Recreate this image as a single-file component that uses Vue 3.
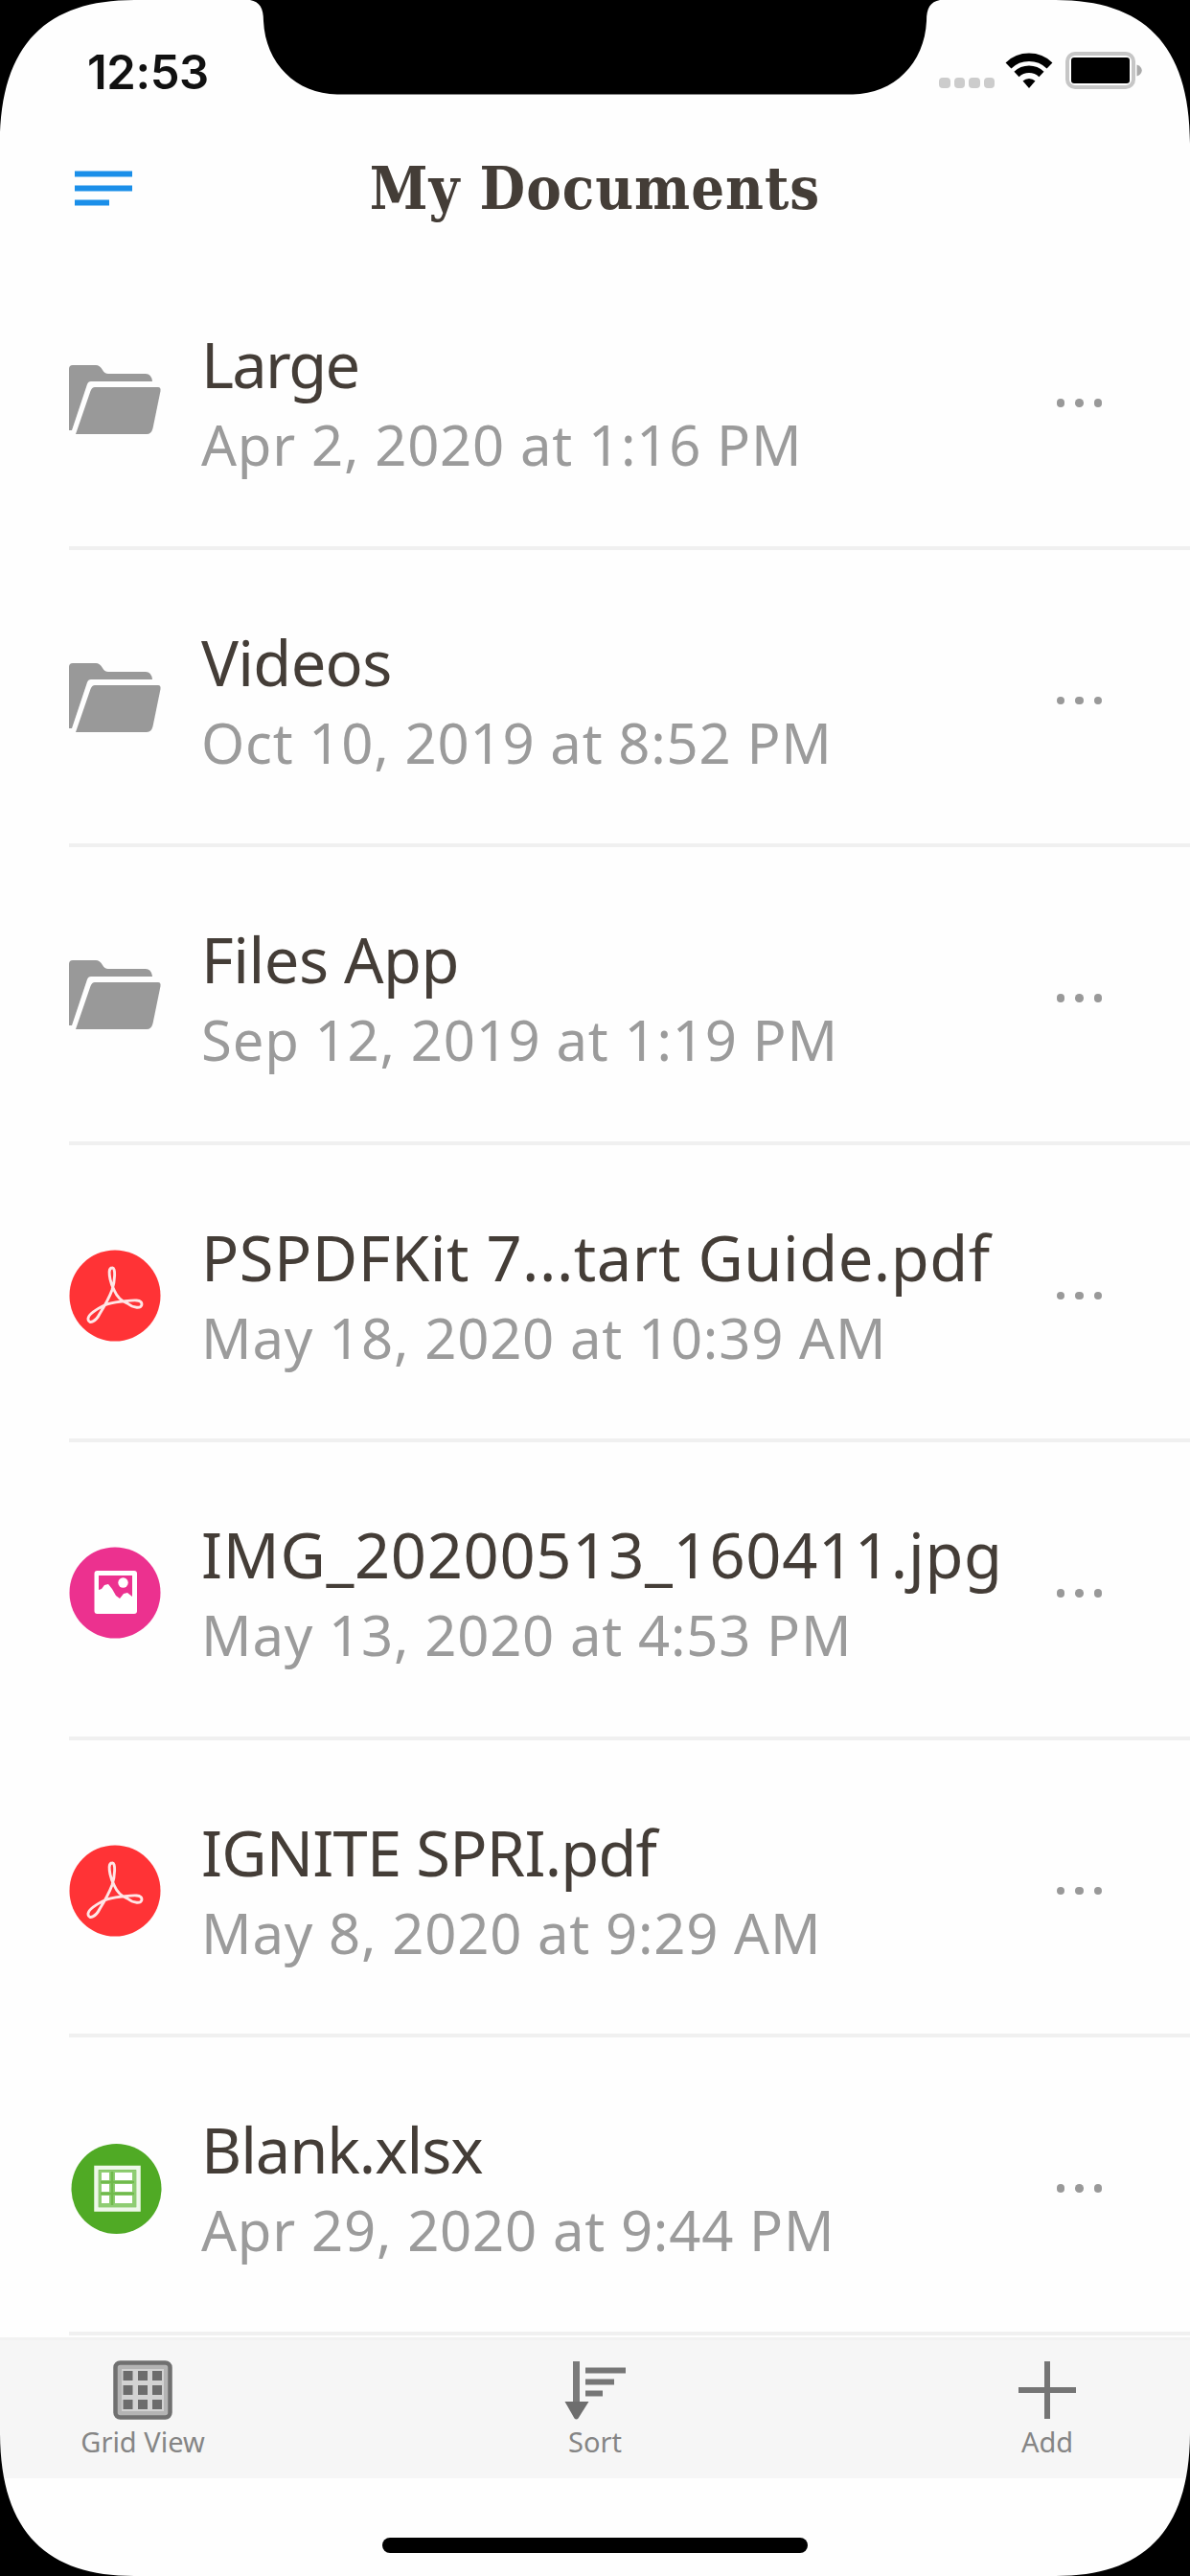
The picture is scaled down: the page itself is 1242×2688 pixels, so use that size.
<template>
  <div class="phone">
    <div class="status-bar">
      <span class="time">12:53</span>
      <div class="status-icons">
        <div class="signal"><i v-for="n in 4" :key="n"></i></div>
        <svg class="wifi" width="50" height="38" viewBox="0 0 50 38">
          <path d="M3.5 14.5a31 31 0 0 1 43 0" fill="none" stroke="#000" stroke-width="8.5" />
          <path d="M12 23.5a19 19 0 0 1 26 0" fill="none" stroke="#000" stroke-width="7.5" />
          <path d="M18.5 30.5a9.5 9.5 0 0 1 13 0L25 38z" />
        </svg>
        <svg class="battery" width="80" height="39" viewBox="0 0 80 39">
          <rect x="2" y="2" width="69" height="35" rx="8" fill="none" stroke="#c6c6c6" stroke-width="4" />
          <rect x="6" y="6" width="61" height="27" rx="3" />
          <path d="M74.5 13.5c7 2 7 10 0 12z" fill="#aaa" />
        </svg>
      </div>
    </div>

    <header>
      <svg class="menu" width="60" height="37" viewBox="0 0 60 37">
        <path d="M0 3.500h60M0 18.500h60M0 33.500h36" stroke="#1b8fe9" stroke-width="6" />
      </svg>
      <h1>My Documents</h1>
    </header>

    <main>
      <div v-for="item in files" :key="item.name" class="row">
        <svg v-if="item.type === 'folder'" class="icon" width="98" height="96" viewBox="0 0 98 96">
          <path d="M1 13Q1 9 5 9H29Q33 9 36 14Q38 18 42 18H81Q87 18 88 26H24Q21 26 20 29L4 77H1z" fill="#999" />
          <path d="M28 32H94Q97 32 96.500 36L88.500 75Q87 81 82 81H8L23.500 36Q25 32 28 32z" fill="#999" />
        </svg>
        <svg v-else-if="item.type === 'pdf'" class="icon" width="98" height="96" viewBox="0 0 98 96">
          <circle cx="49" cy="48" r="47.500" fill="#ff3336" />
          <path
            d="M46 19C42 19 43 26 44 31C45 36 46 38 48 42C51 49 56 54 62 56C68 61 77 62 77 57C77 51 66 53 56 54C48 55 42 56 38 58C30 62 20 68 21 73C22 78 29 75 33 67C38 59 43 50 46 42C49 33 50 18 46 19z"
            fill="none" stroke="#fff" stroke-opacity=".88" stroke-width="2.900"
          />
        </svg>
        <svg v-else-if="item.type === 'image'" class="icon" width="98" height="96" viewBox="0 0 98 96">
          <circle cx="49" cy="48" r="47.500" fill="#ec318f" />
          <rect x="27.500" y="25" width="44.500" height="45" rx="3" fill="#fff" />
          <path d="M32 30H67V52L62 48L58 49L54 54L50 51L46 44L42 39L38 40L35 44L32 45z" fill="#ec318f" />
          <circle cx="57.500" cy="37.500" r="5.200" fill="#fff" />
        </svg>
        <svg v-else class="icon" width="98" height="96" viewBox="0 0 98 96">
          <circle cx="50.500" cy="49" r="47" fill="#50aa25" />
          <rect x="29.500" y="27" width="44" height="43.500" fill="none" stroke="#eef8e9" stroke-width="4.500" />
          <path d="M32 29.500h39v38.500h-39z" fill="#8fcd73" />
          <path d="M35 32h8v8h-8zM35 44h8v8h-8zM35 56h8v8h-8zM49 32h18v8h-18zM49 44h18v8h-18zM49 56h18v8h-18z" fill="#fff" />
          <path d="M34 42h35M34 54h35M46 31v35" stroke="#70ba4c" stroke-width="2.500" />
        </svg>
        <div class="info">
          <div class="name" :style="{ letterSpacing: item.tracking + 'px' }">{{ item.name }}</div>
          <div class="date">{{ item.date }}</div>
        </div>
        <div class="more"><i></i><i></i><i></i></div>
      </div>
    </main>

    <footer>
      <div class="tool">
        <svg width="62" height="62" viewBox="0 0 62 62">
          <rect x="2.500" y="2.500" width="57" height="57" rx="5" fill="#b4b4b4" stroke="#707070" stroke-width="4.500" />
          <path d="M9 9h44v44H9z" fill="#d2d2d2" />
          <path d="M10.500 11h10v10h-10zM26 11h10v10h-10zM41 11h10v10h-10zM10.500 26h10v10h-10zM26 26h10v10h-10zM41 26h10v10h-10zM10.500 41h10v10h-10zM26 41h10v10h-10zM41 41h10v10h-10z" fill="#6c6c6c" />
        </svg>
        <span>Grid View</span>
      </div>
      <div class="tool">
        <svg width="64" height="62" viewBox="0 0 64 62">
          <path d="M12.500 1v46" stroke="#7a7a7a" stroke-width="7" />
          <path d="M.5 43h25L14.500 60.500q-2 2-4 0z" fill="#6e6e6e" />
          <path d="M22 10.500h42M22 22.500h30M22 34.500h18" stroke="#767676" stroke-width="6" />
        </svg>
        <span>Sort</span>
      </div>
      <div class="tool">
        <svg width="62" height="62" viewBox="0 0 62 62">
          <path d="M31 1v60M1 31h60" stroke="#757575" stroke-width="6" />
        </svg>
        <span>Add</span>
      </div>
    </footer>
    <div class="home"><span></span></div>

    <!-- notch and rounded screen corners -->
    <svg class="bezel" width="1242" height="2688" viewBox="0 0 1242 2688">
      <path d="M0 0H140C50 0 0 45 0 150z" />
      <path d="M1242 0H1102C1192 0 1242 45 1242 150z" />
      <path d="M0 2688H140C50 2688 0 2643 0 2538z" />
      <path d="M1242 2688H1102C1192 2688 1242 2643 1242 2538z" />
      <path d="M261 0C271 2 275 8 275 22C277 66 309 98 352 98.500H890C933 98 965 66 967 22C967 8 971 2 981 0z" />
    </svg>
  </div>
</template>

<script setup>
// tracking: letter spacing of the file name in px
const files = [
  { name: 'Large', date: 'Apr 2, 2020 at 1:16 PM', type: 'folder', tracking: -1.8 },
  { name: 'Videos', date: 'Oct 10, 2019 at 8:52 PM', type: 'folder', tracking: -0.7 },
  { name: 'Files App', date: 'Sep 12, 2019 at 1:19 PM', type: 'folder', tracking: -0.5 },
  { name: 'PSPDFKit 7...tart Guide.pdf', date: 'May 18, 2020 at 10:39 AM', type: 'pdf', tracking: 0.5 },
  { name: 'IMG_20200513_160411.jpg', date: 'May 13, 2020 at 4:53 PM', type: 'image', tracking: 0.7 },
  { name: 'IGNITE SPRI.pdf', date: 'May 8, 2020 at 9:29 AM', type: 'pdf', tracking: -0.8 },
  { name: 'Blank.xlsx', date: 'Apr 29, 2020 at 9:44 PM', type: 'sheet', tracking: -1.1 },
]
</script>

<style>
body {
  margin: 0;
  background: #fefefe;
}
</style>

<style scoped>
.phone {
  position: relative;
  display: flex;
  flex-direction: column;
  width: 1242px;
  height: 2688px;
  overflow: hidden;
  background: #fefefe;
  font-family: "Noto Sans", "Open Sans", sans-serif;
}
.status-bar {
  display: flex;
  justify-content: space-between;
  box-sizing: border-box;
  height: 99px;
  padding: 45px 50px 0 91px;
}
.time {
  font: 600 49px/61px Inter, sans-serif;
  letter-spacing: -0.4px;
  color: #111;
}
.status-icons {
  display: flex;
  align-items: flex-start;
  padding-top: 9px;
}
.signal {
  display: flex;
  gap: 4px;
  margin: 27px 11px 0 0;
}
.signal i {
  width: 11.5px;
  height: 11px;
  border-radius: 4px;
  background: #ccc;
}
.battery {
  margin-left: 13px;
}
header {
  position: relative;
  display: flex;
  align-items: flex-start;
  height: 164px;
}
.menu {
  margin: 79px 0 0 78px;
}
h1 {
  position: absolute;
  left: 0;
  right: 0;
  top: 58px;
  margin: 0;
  font: bold 61px/80px "DejaVu Serif Condensed", "DejaVu Serif", serif;
  letter-spacing: 1px;
  text-align: center;
  color: #443d37;
}
main {
  height: 2176px;
}
.row {
  display: flex;
  align-items: flex-start;
  box-sizing: border-box;
  height: 310.5px;
  margin-left: 72px;
  border-bottom: 4px solid #f0f0f0;
}
.icon {
  flex: none;
  margin: 109px 0 0 -1px;
}
.info {
  flex: 1;
  margin-left: 41px;
  padding-top: 76px;
  white-space: nowrap;
}
.name {
  font-size: 65px;
  line-height: 82px;
  color: #443d37;
}
.date {
  margin-top: 2px;
  font-size: 58px;
  line-height: 82px;
  letter-spacing: 0.8px;
  color: #9b9b9b;
}
.more {
  display: flex;
  gap: 11px;
  margin: 153px 92px 0 0;
}
.more i {
  width: 8.5px;
  height: 8.5px;
  border-radius: 50%;
  background: #999;
}
footer {
  display: flex;
  justify-content: space-between;
  box-sizing: border-box;
  height: 147px;
  padding: 24px 48px 0;
  background: #f6f6f6;
  border-top: 3px solid #f2f2f2;
}
.tool {
  display: flex;
  flex-direction: column;
  align-items: center;
  width: 202px;
  margin-top: -3px;
  font-size: 29px;
  line-height: 40px;
  color: #858585;
}
.tool span {
  margin-top: 3px;
}
.home {
  display: flex;
  justify-content: center;
  padding-top: 62px;
}
.home span {
  width: 444px;
  height: 16px;
  border-radius: 8px;
  background: #000;
}
.bezel {
  position: absolute;
  left: 0;
  top: 0;
}
</style>
